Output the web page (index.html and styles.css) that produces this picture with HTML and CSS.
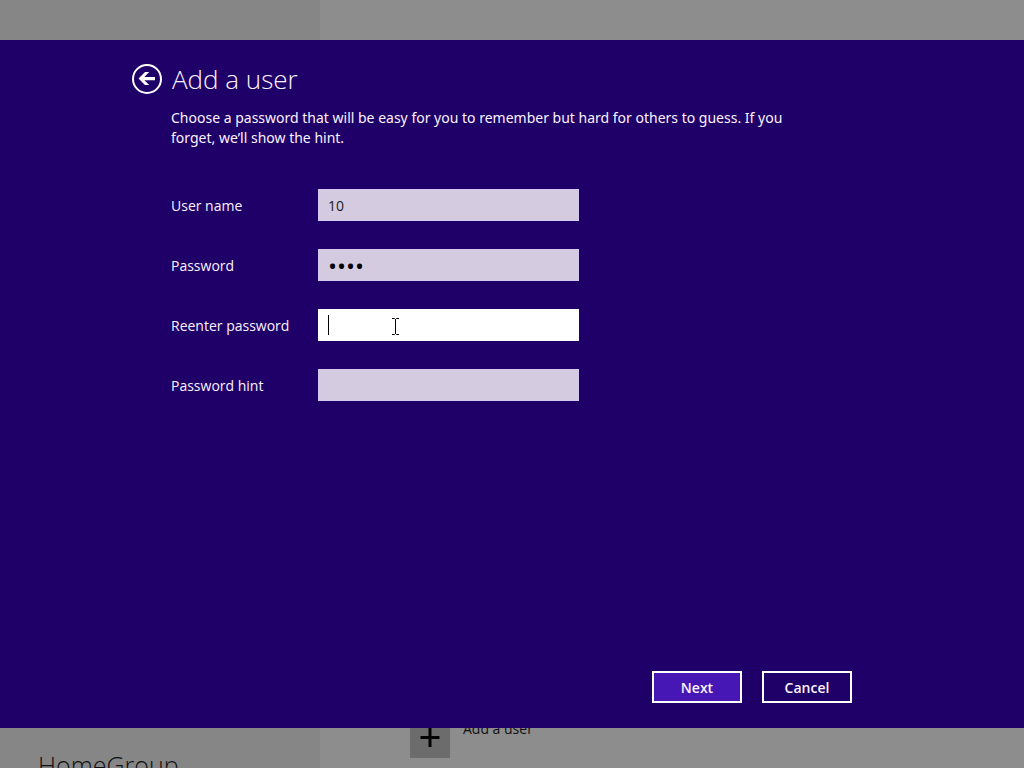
FILE: index.html
```html
<!DOCTYPE html>
<html lang="en">
<head>
<meta charset="utf-8">
<title>Add a user</title>
<link rel="stylesheet" href="styles.css">
</head>
<body>
<div class="settings">
  <nav class="sidebar"><a class="sidebar-link" href="#">HomeGroup</a></nav>
  <main class="content">
    <button class="add-user" type="button">
      <span class="add-tile">
        <svg width="40" height="40" viewBox="0 0 40 40" aria-hidden="true"><path d="M20 10v19M10.500 19.500h19" stroke="#000" stroke-width="3"/></svg>
      </span>
      <span class="add-label">Add a user</span>
    </button>
  </main>
</div>

<form class="dialog" role="dialog" aria-labelledby="dialog-title">
  <header class="heading">
    <button class="back" type="button" aria-label="Back">
      <svg width="32" height="32" viewBox="0 0 32 32" aria-hidden="true">
        <circle cx="16" cy="16" r="14" fill="none" stroke="#fff" stroke-width="2"/>
        <path d="M7.500 15.500L14 9h4.200l-4.800 4.900H24v3.300H13.400l4.800 4.800H14z" fill="#fff"/>
      </svg>
    </button>
    <h1 class="title" id="dialog-title">Add a user</h1>
  </header>
  <div class="body">
    <p class="intro">Choose a password that will be easy for you to remember but hard for others to guess. If you forget, we’ll show the hint.</p>
    <div class="fields">
      <label class="label" for="user">User name</label>
      <div class="control"><input class="input" id="user" type="text" value="10"></div>
      <label class="label" for="password">Password</label>
      <div class="control"><input class="input input-password" id="password" type="password" value="1234"></div>
      <label class="label" for="again">Reenter password</label>
      <div class="control">
        <input class="input input-active" id="again" type="password">
        <span class="caret"></span>
        <svg class="pointer" width="9" height="17" viewBox="0 0 9 17" aria-hidden="true"><path d="M1 .5h2.500l1 1 1-1H8M1 16.500h2.500l1-1 1 1H8M4.500 1v15" fill="none" stroke="#000"/></svg>
      </div>
      <label class="label" for="hint">Password hint</label>
      <div class="control"><input class="input" id="hint" type="text"></div>
    </div>
  </div>
  <footer class="actions">
    <button class="button button-primary" type="button">Next</button>
    <button class="button" type="button">Cancel</button>
  </footer>
</form>
</body>
</html>
```
FILE: styles.css
```css
* { box-sizing: border-box; }

body {
  margin: 0;
  font: 14px/20px "Segoe UI", "Open Sans", "Noto Sans", sans-serif;
}

button, input { font: inherit; }

.settings {
  display: grid;
  grid-template-columns: 320px 1fr;
  height: 100vh;
  overflow: hidden;
  background: #8d8d8d;
}

.sidebar {
  padding: calc(100vh - 20px) 38px 0;
  background: #868686;
}

.sidebar-link {
  display: block;
  color: #101010;
  font-size: 25px;
  font-weight: 300;
  line-height: 34px;
  text-decoration: none;
}

.content { padding: calc(100vh - 50px) 90px 0; }

.add-user {
  display: flex;
  gap: 13px;
  padding: 0;
  border: 0;
  background: none;
  color: #111;
}

.add-tile {
  width: 40px;
  height: 40px;
  background: #6c6c6c;
}

.add-label { line-height: 22px; }

.dialog {
  position: fixed;
  inset: 40px 0;
  display: flex;
  flex-direction: column;
  padding: 23px 172px 25px 131px;
  background: #1f0068;
  color: #fbf3ff;
}

.heading {
  display: flex;
  align-items: center;
  gap: 9px;
}

.back {
  width: 32px;
  height: 32px;
  padding: 0;
  border: 0;
  background: none;
}

.back svg { display: block; }

.title {
  margin: 0;
  font-size: 26px;
  font-weight: 300;
  line-height: 32px;
}

.body {
  flex: 1;
  padding: 13px 0 0 40px;
}

.intro {
  max-width: 630px;
  margin: 0 0 41px;
  font-family: "Segoe UI", "Noto Sans", "Open Sans", sans-serif;
}

.fields {
  display: grid;
  grid-template-columns: 119px 261px;
  gap: 28px;
  align-items: center;
}

.label {
  line-height: 22px;
  padding-top: 2px;
  white-space: nowrap;
}

.control { position: relative; }

.input {
  display: block;
  width: 100%;
  height: 32px;
  padding: 0 9px;
  border: 1px solid #d5c8ee;
  border-radius: 0;
  outline: 0;
  background: #d4cbe0;
  color: #1a1a1a;
}

.input-password {
  color: #000;
  font-size: 24px;
}

.input-active {
  border-color: #fff;
  background: #fff;
}

.caret {
  position: absolute;
  top: 6px;
  left: 10px;
  width: 1px;
  height: 20px;
  background: #000;
}

.pointer {
  position: absolute;
  top: 9px;
  left: 73px;
}

.actions {
  display: flex;
  justify-content: flex-end;
  gap: 20px;
}

.button {
  width: 90px;
  height: 32px;
  padding: 2px 0 0;
  border: 2px solid #fff;
  background: #1f0068;
  color: #fbf3ff;
  font-weight: 600;
}

.button-primary { background: #4617b4; }
```
